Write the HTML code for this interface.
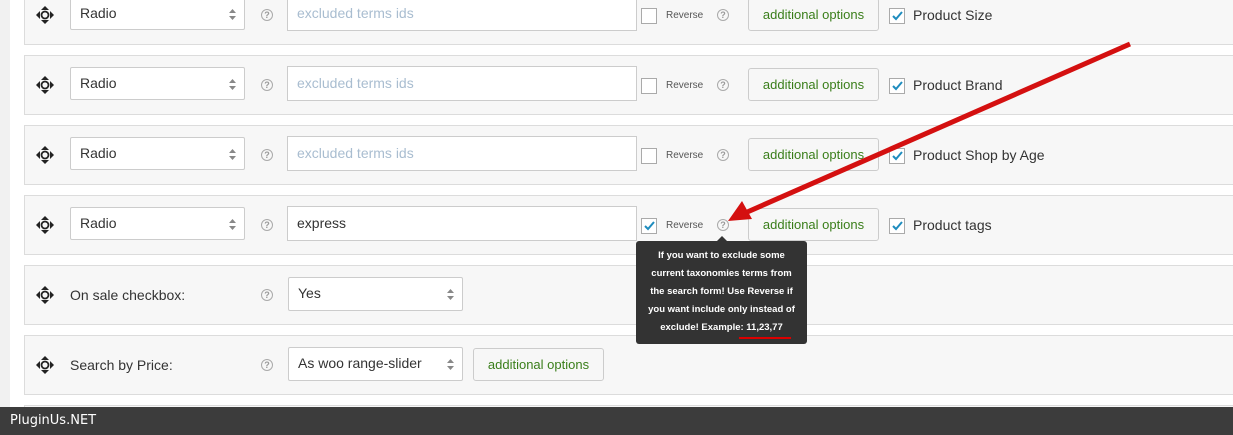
<!DOCTYPE html><html style="overflow:hidden;height:435px"><head><style>
body{margin:0;width:1233px;height:435px;overflow:hidden;background:#fff;font-family:"Liberation Sans",sans-serif;position:relative}
.strip{position:absolute;left:0;top:0;width:10px;height:435px;background:#f1f1f1}
.row{position:absolute;left:24px;width:1215px;height:58px;background:#f7f7f7;border:1px solid #dcdcdc}
.mv{position:absolute;left:10px;top:19px}
.sel{position:absolute;height:33px;background:#fff;border:1px solid #ccc;border-radius:2px;box-sizing:border-box;font-size:14px;color:#333;padding:7px 9px}
.q{position:absolute;width:10px;height:10px;border:1.5px solid #aaa;border-radius:50%;font-size:9px;color:#999;text-align:center;line-height:10px;font-weight:bold}
.inp{position:absolute;left:262px;top:10px;width:350px;height:35px;background:#fff;border:1px solid #ccc;box-sizing:border-box;font-size:14px;padding:8px 9px;color:#a9bdd0}
.cb{position:absolute;width:16px;height:16px;background:#fff;border:1px solid #aaa;box-sizing:border-box}
.rv{position:absolute;font-size:10px;color:#555}
.btn{position:absolute;width:131px;height:33px;background:#f7f7f7;border:1px solid #ccc;border-radius:3px;box-sizing:border-box;font-size:13px;color:#3a7e1a;text-align:center;line-height:31px}
.lb{position:absolute;font-size:14px;color:#333}
.lab{position:absolute;left:45px;top:21px;font-size:14px;color:#333}
</style></head><body>
<div class="strip"></div>
<svg width="0" height="0" style="position:absolute"><defs>
<g id="mv"><path d="M10 1l4 4h-8z M10 19l4-4h-8z M1 10l4-4v8z M19 10l-4-4v8z" fill="#222"/><circle cx="10" cy="10" r="3.5" fill="none" stroke="#222" stroke-width="1.8"/></g>
<g id="ck"><path d="M3 7l3 3 6-7" fill="none" stroke="#1e8cbe" stroke-width="2"/></g>
<g id="ar"><path d="M0 4l3.5-4 3.5 4z M0 7l3.5 4 3.5-4z" fill="#888"/></g>
</defs></svg>
<div class="row" style="top:-15px">
<svg class="mv" width="20" height="20"><use href="#mv"/></svg>
<div class="sel" style="left:45px;top:11px;width:175px">Radio<svg style="position:absolute;right:8px;top:11px" width="7" height="11"><use href="#ar"/></svg></div>
<div class="q" style="left:236px;top:23px">?</div>
<div class="inp">excluded terms ids</div>
<div class="cb" style="left:616px;top:22px"></div><div class="rv" style="left:641px;top:24px">Reverse</div>
<div class="q" style="left:692px;top:23px">?</div>
<div class="btn" style="left:723px;top:12px">additional options</div>
<div class="cb" style="left:864px;top:22px"><svg width="15" height="15"><use href="#ck"/></svg></div><div class="lb" style="left:888px;top:21px">Product Size</div>
</div>
<div class="row" style="top:55px">
<svg class="mv" width="20" height="20"><use href="#mv"/></svg>
<div class="sel" style="left:45px;top:11px;width:175px">Radio<svg style="position:absolute;right:8px;top:11px" width="7" height="11"><use href="#ar"/></svg></div>
<div class="q" style="left:236px;top:23px">?</div>
<div class="inp">excluded terms ids</div>
<div class="cb" style="left:616px;top:22px"></div><div class="rv" style="left:641px;top:24px">Reverse</div>
<div class="q" style="left:692px;top:23px">?</div>
<div class="btn" style="left:723px;top:12px">additional options</div>
<div class="cb" style="left:864px;top:22px"><svg width="15" height="15"><use href="#ck"/></svg></div><div class="lb" style="left:888px;top:21px">Product Brand</div>
</div>
<div class="row" style="top:125px">
<svg class="mv" width="20" height="20"><use href="#mv"/></svg>
<div class="sel" style="left:45px;top:11px;width:175px">Radio<svg style="position:absolute;right:8px;top:11px" width="7" height="11"><use href="#ar"/></svg></div>
<div class="q" style="left:236px;top:23px">?</div>
<div class="inp">excluded terms ids</div>
<div class="cb" style="left:616px;top:22px"></div><div class="rv" style="left:641px;top:24px">Reverse</div>
<div class="q" style="left:692px;top:23px">?</div>
<div class="btn" style="left:723px;top:12px">additional options</div>
<div class="cb" style="left:864px;top:22px"><svg width="15" height="15"><use href="#ck"/></svg></div><div class="lb" style="left:888px;top:21px">Product Shop by Age</div>
</div>
<div class="row" style="top:195px">
<svg class="mv" width="20" height="20"><use href="#mv"/></svg>
<div class="sel" style="left:45px;top:11px;width:175px">Radio<svg style="position:absolute;right:8px;top:11px" width="7" height="11"><use href="#ar"/></svg></div>
<div class="q" style="left:236px;top:23px">?</div>
<div class="inp" style="color:#333">express</div>
<div class="cb" style="left:616px;top:22px"><svg width="15" height="15"><use href="#ck"/></svg></div><div class="rv" style="left:641px;top:24px">Reverse</div>
<div class="q" style="left:692px;top:23px">?</div>
<div class="btn" style="left:723px;top:12px">additional options</div>
<div class="cb" style="left:864px;top:22px"><svg width="15" height="15"><use href="#ck"/></svg></div><div class="lb" style="left:888px;top:21px">Product tags</div>
</div>
<div class="row" style="top:265px">
<svg class="mv" width="20" height="20"><use href="#mv"/></svg>
<div class="lab">On sale checkbox:</div>
<div class="q" style="left:236px;top:23px">?</div>
<div class="sel" style="left:263px;top:11px;width:175px;height:34px">Yes<svg style="position:absolute;right:8px;top:11px" width="7" height="11"><use href="#ar"/></svg></div>
</div>
<div class="row" style="top:335px">
<svg class="mv" width="20" height="20"><use href="#mv"/></svg>
<div class="lab">Search by Price:</div>
<div class="q" style="left:236px;top:23px">?</div>
<div class="sel" style="left:263px;top:11px;width:175px;height:34px">As woo range-slider<svg style="position:absolute;right:8px;top:11px" width="7" height="11"><use href="#ar"/></svg></div>
<div class="btn" style="left:448px;top:12px">additional options</div>
</div>
<div class="row" style="top:405px;height:20px"></div>
<div style="position:absolute;left:636px;top:241px;width:171px;height:103px;background:#333;border-radius:3px;color:#fff;font-size:9.5px;font-weight:bold;text-align:center;line-height:18px;padding-top:6px;box-sizing:border-box">If you want to exclude some<br>current taxonomies terms from<br>the search form! Use Reverse if<br>you want include only instead of<br>exclude! Example: 11,23,77</div>
<div style="position:absolute;left:717px;top:236px;width:0;height:0;border-left:5px solid transparent;border-right:5px solid transparent;border-bottom:5px solid #333"></div>
<div style="position:absolute;left:739px;top:337px;width:52px;height:2px;background:#d00"></div>
<svg style="position:absolute;left:0;top:0" width="1233" height="435"><line x1="1130" y1="44" x2="745" y2="213" stroke="#d41010" stroke-width="5"/><path d="M728 221l14-20 10 18z" fill="#d41010"/></svg>
<div style="position:absolute;left:0;top:407px;width:1233px;height:28px;background:#3c3c3c;color:#fff;font-size:13px;line-height:28px;padding-left:10px;box-sizing:border-box;font-family:'DejaVu Sans',sans-serif">PluginUs.NET</div>
</body></html>
